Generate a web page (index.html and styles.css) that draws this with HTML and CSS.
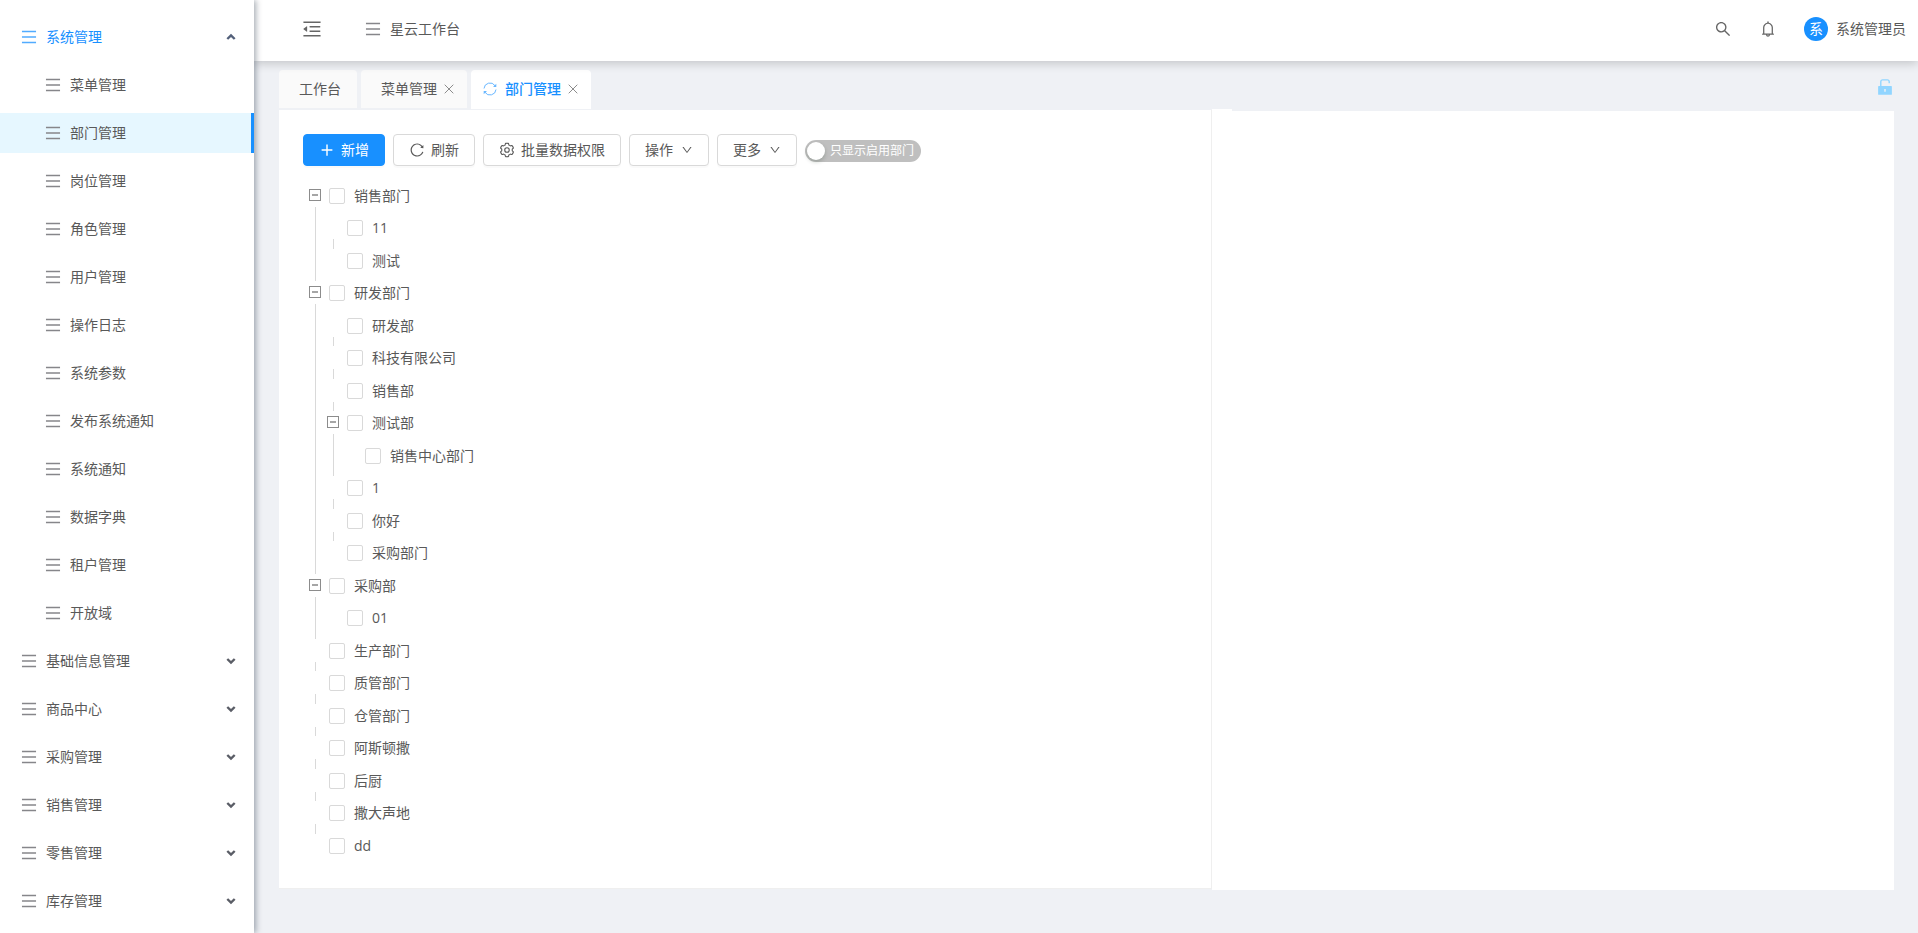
FILE: index.html
```html
<!DOCTYPE html>
<html lang="zh-CN">
<head>
<meta charset="utf-8">
<title>部门管理 - 星云工作台</title>
<link rel="stylesheet" href="styles.css">
</head>
<body>
<svg class="sprite" aria-hidden="true">
  <symbol id="bars" viewBox="0 0 1024 1024"><path d="M112 160h800v80H112zM112 472h800v80H112zM112 784h800v80H112z"/></symbol>
  <symbol id="fold" viewBox="0 0 1024 1024"><path d="M408 442h480c4.400 0 8-3.600 8-8v-56c0-4.400-3.600-8-8-8H408c-4.400 0-8 3.600-8 8v56c0 4.400 3.600 8 8 8zm-8 204c0 4.400 3.600 8 8 8h480c4.400 0 8-3.600 8-8v-56c0-4.400-3.600-8-8-8H408c-4.400 0-8 3.600-8 8v56zm504-486H120c-4.400 0-8 3.600-8 8v56c0 4.400 3.600 8 8 8h784c4.400 0 8-3.600 8-8v-56c0-4.400-3.600-8-8-8zm0 632H120c-4.400 0-8 3.600-8 8v56c0 4.400 3.600 8 8 8h784c4.400 0 8-3.600 8-8v-56c0-4.400-3.600-8-8-8zM115.400 518.900L271.700 642c5.800 4.600 14.400.5 14.400-6.900V388.900c0-7.400-8.500-11.500-14.400-6.900L115.400 505.100a8.740 8.740 0 000 13.800z"/></symbol>
  <symbol id="plus" viewBox="0 0 1024 1024"><path d="M466 152h92v314h298v92H558v314h-92V558H168v-92h298z"/></symbol>
  <symbol id="reload" viewBox="0 0 1024 1024"><path d="M909.1 209.3l-56.400 44.100C775.800 155.100 656.200 92 521.900 92 290 92 102.300 279.500 102 511.500 101.700 743.700 289.800 932 521.900 932c181.300 0 335.800-115 394.600-276.100 1.500-4.200-.7-8.900-4.900-10.300l-56.700-19.500a8 8 0 00-10.100 4.800c-1.800 5-3.800 10-5.900 14.900-17.300 41-42.100 77.800-73.700 109.400A344.770 344.770 0 01655.900 829c-42.300 17.900-87.400 27-133.800 27-46.500 0-91.500-9.100-133.800-27A341.500 341.500 0 01279 755.200a342.160 342.160 0 01-73.700-109.400c-17.900-42.400-27-87.400-27-133.900s9.100-91.500 27-133.900c17.300-41 42.100-77.800 73.700-109.400 31.600-31.600 68.400-56.400 109.300-73.800 42.300-17.900 87.400-27 133.800-27 46.500 0 91.500 9.100 133.800 27a341.500 341.500 0 01109.300 73.800c9.900 9.900 19.200 20.400 27.800 31.400l-60.200 47a8 8 0 003 14.100l175.600 43c5 1.200 9.900-2.600 9.900-7.700l.8-180.900c-.1-6.600-7.800-10.300-13-6.200z"/></symbol>
  <symbol id="gear" viewBox="0 0 1024 1024"><g fill="none" stroke="currentColor" stroke-width="72"><path transform="translate(20 20) scale(.96)" d="M924.800 625.700l-65.500-56c3.100-19 4.700-38.400 4.700-57.800s-1.600-38.800-4.700-57.800l65.500-56a32.030 32.030 0 009.300-35.200l-.9-2.600a443.740 443.740 0 00-79.700-137.900l-1.800-2.100a32.120 32.120 0 00-35.100-9.500l-81.300 28.900c-30-24.600-63.500-44-99.700-57.600l-15.700-85a32.050 32.050 0 00-25.800-25.700l-2.700-.5c-52.100-9.400-106.900-9.400-159 0l-2.700.5a32.050 32.050 0 00-25.800 25.700l-15.800 85.400a351.860 351.860 0 00-99 57.400l-81.900-29.100a32 32 0 00-35.100 9.500l-1.800 2.100a446.020 446.020 0 00-79.700 137.900l-.9 2.600c-4.500 12.500-.8 26.500 9.300 35.200l66.300 56.600c-3.100 18.800-4.600 38-4.600 57.100 0 19.200 1.500 38.400 4.600 57.100L99 625.500a32.030 32.030 0 00-9.300 35.200l.9 2.600c18.100 50.400 44.900 96.900 79.700 137.900l1.800 2.100a32.120 32.120 0 0035.100 9.500l81.900-29.100c29.800 24.500 63.100 43.900 99 57.400l15.800 85.400a32.050 32.050 0 0025.800 25.700l2.700.5a449.400 449.400 0 00159 0l2.700-.5a32.050 32.050 0 0025.800-25.700l15.700-85a350 350 0 0099.700-57.600l81.300 28.900a32 32 0 0035.100-9.500l1.800-2.100c34.800-41.100 61.600-87.500 79.700-137.900l.9-2.600c4.500-12.300.8-26.300-9.300-35z"/><circle cx="512" cy="512" r="146"/></g></symbol>
  <symbol id="down" viewBox="0 0 1024 1024"><path d="M884 256h-75c-5.100 0-9.900 2.500-12.900 6.600L512 654.200 227.900 262.600c-3-4.100-7.800-6.600-12.900-6.600h-75c-6.500 0-10.300 7.400-6.500 12.700l352.600 486.100c12.800 17.600 39 17.600 51.700 0l352.600-486.100c3.900-5.300.1-12.700-6.400-12.700z"/></symbol>
  <symbol id="search" viewBox="0 0 1024 1024"><path d="M909.600 854.500L649.900 594.800C690.200 542.700 712 479 712 412c0-80.200-31.300-155.400-87.900-212.100-56.600-56.700-132-87.900-212.100-87.900s-155.500 31.300-212.100 87.900C143.200 256.500 112 331.800 112 412c0 80.100 31.300 155.500 87.900 212.100C256.500 680.800 331.800 712 412 712c67 0 130.600-21.800 182.700-62l259.700 259.600a8.200 8.200 0 0011.600 0l43.600-43.500a8.200 8.200 0 000-11.600zM570.400 570.400C528 612.700 471.800 636 412 636s-116-23.300-158.400-65.600C211.300 528 188 471.800 188 412s23.300-116.100 65.600-158.400C296 211.300 352.200 188 412 188s116.100 23.200 158.400 65.600S636 352.200 636 412s-23.300 116.100-65.600 158.400z"/></symbol>
  <symbol id="bell" viewBox="0 0 1024 1024"><path d="M816 768h-24V428c0-141.100-104.300-257.800-240-277.200V112c0-22.100-17.900-40-40-40s-40 17.900-40 40v38.800C336.300 170.200 232 286.900 232 428v340h-24c-17.700 0-32 14.300-32 32v32c0 4.400 3.600 8 8 8h216c0 61.800 50.200 112 112 112s112-50.200 112-112h216c4.400 0 8-3.600 8-8v-32c0-17.700-14.300-32-32-32zM512 888c-26.500 0-48-21.500-48-48h96c0 26.500-21.500 48-48 48zM304 768V428c0-55.600 21.600-107.800 60.900-147.100S456.400 220 512 220c55.600 0 107.800 21.600 147.100 60.900S720 372.400 720 428v340H304z"/></symbol>
  <symbol id="unlock" viewBox="0 0 1024 1024"><path d="M832 464H332V240c0-30.900 25.100-56 56-56h248c30.900 0 56 25.100 56 56v68c0 4.400 3.600 8 8 8h56c4.400 0 8-3.600 8-8v-68c0-70.700-57.300-128-128-128H388c-70.700 0-128 57.300-128 128v224h-68c-17.700 0-32 14.300-32 32v384c0 17.700 14.300 32 32 32h640c17.700 0 32-14.300 32-32V496c0-17.700-14.300-32-32-32zM540 701v53c0 4.400-3.600 8-8 8h-40c-4.400 0-8-3.600-8-8v-53a48.010 48.010 0 1156 0z"/></symbol>
  <symbol id="sync" viewBox="0 0 14 14"><path d="M1 6.500a6 6 0 0 1 11-2.800M13 7.500a6 6 0 0 1-11 2.800" fill="none" stroke="currentColor"/><path d="M13.300 1.700v3.200h-3.300zM.7 12.300V9.100H4z"/></symbol>
  <symbol id="close" viewBox="0 0 10 10"><path d="M.7.700l8.600 8.600M9.300.700L.7 9.300" fill="none" stroke="currentColor"/></symbol>
  <symbol id="chevron" viewBox="0 0 10 10"><path d="M1.300 3L5 6.600 8.700 3" fill="none" stroke="currentColor" stroke-width="2.400"/></symbol>
</svg>
<div class="app">
  <nav class="sidebar">
    <button class="item head open" aria-expanded="true"><svg class="i18"><use href="#bars"/></svg><span>系统管理</span><svg class="arrow"><use href="#chevron"/></svg></button>
    <a class="item sub" href="#"><svg class="i18"><use href="#bars"/></svg><span>菜单管理</span></a>
    <a class="item sub active" href="#"><svg class="i18"><use href="#bars"/></svg><span>部门管理</span></a>
    <a class="item sub" href="#"><svg class="i18"><use href="#bars"/></svg><span>岗位管理</span></a>
    <a class="item sub" href="#"><svg class="i18"><use href="#bars"/></svg><span>角色管理</span></a>
    <a class="item sub" href="#"><svg class="i18"><use href="#bars"/></svg><span>用户管理</span></a>
    <a class="item sub" href="#"><svg class="i18"><use href="#bars"/></svg><span>操作日志</span></a>
    <a class="item sub" href="#"><svg class="i18"><use href="#bars"/></svg><span>系统参数</span></a>
    <a class="item sub" href="#"><svg class="i18"><use href="#bars"/></svg><span>发布系统通知</span></a>
    <a class="item sub" href="#"><svg class="i18"><use href="#bars"/></svg><span>系统通知</span></a>
    <a class="item sub" href="#"><svg class="i18"><use href="#bars"/></svg><span>数据字典</span></a>
    <a class="item sub" href="#"><svg class="i18"><use href="#bars"/></svg><span>租户管理</span></a>
    <a class="item sub" href="#"><svg class="i18"><use href="#bars"/></svg><span>开放域</span></a>
    <button class="item head"><svg class="i18"><use href="#bars"/></svg><span>基础信息管理</span><svg class="arrow"><use href="#chevron"/></svg></button>
    <button class="item head"><svg class="i18"><use href="#bars"/></svg><span>商品中心</span><svg class="arrow"><use href="#chevron"/></svg></button>
    <button class="item head"><svg class="i18"><use href="#bars"/></svg><span>采购管理</span><svg class="arrow"><use href="#chevron"/></svg></button>
    <button class="item head"><svg class="i18"><use href="#bars"/></svg><span>销售管理</span><svg class="arrow"><use href="#chevron"/></svg></button>
    <button class="item head"><svg class="i18"><use href="#bars"/></svg><span>零售管理</span><svg class="arrow"><use href="#chevron"/></svg></button>
    <button class="item head"><svg class="i18"><use href="#bars"/></svg><span>库存管理</span><svg class="arrow"><use href="#chevron"/></svg></button>
  </nav>
  <div class="page">
    <header class="topbar">
      <button class="plain" aria-label="收起菜单"><svg class="i22"><use href="#fold"/></svg></button>
      <a class="crumb" href="#"><svg class="i18"><use href="#bars"/></svg><span>星云工作台</span></a>
      <div class="tools">
        <button class="plain" aria-label="搜索"><svg class="i18"><use href="#search"/></svg></button>
        <button class="plain" aria-label="通知"><svg class="i18"><use href="#bell"/></svg></button>
        <button class="user"><span class="avatar">系</span><span>系统管理员</span></button>
      </div>
    </header>
    <div class="tabs">
      <a class="tab" href="#">工作台</a>
      <div class="tab closable"><a href="#">菜单管理</a><button class="plain" aria-label="关闭菜单管理"><svg class="i10"><use href="#close"/></svg></button></div>
      <div class="tab current"><svg class="i14"><use href="#sync"/></svg><a href="#">部门管理</a><button class="plain" aria-label="关闭部门管理"><svg class="i10"><use href="#close"/></svg></button></div>
      <button class="plain lock" aria-label="锁定标签"><svg class="i20"><use href="#unlock"/></svg></button>
    </div>
    <main class="panels">
      <section class="panel left">
        <div class="actions">
          <button class="btn primary"><svg class="i16"><use href="#plus"/></svg>新增</button>
          <button class="btn"><svg class="i16"><use href="#reload"/></svg>刷新</button>
          <button class="btn"><svg class="i16"><use href="#gear"/></svg>批量数据权限</button>
          <button class="btn menu">操作<svg class="i12"><use href="#down"/></svg></button>
          <button class="btn menu">更多<svg class="i12"><use href="#down"/></svg></button>
          <button class="switch" role="switch" aria-checked="false"><span class="knob"></span>只显示启用部门</button>
        </div>
        <ul class="tree">
          <li><div class="row"><button class="toggle" aria-label="收起"></button><label><input type="checkbox">销售部门</label></div>
            <ul>
              <li><div class="row tall"><label><input type="checkbox">11</label></div></li>
              <li><div class="row"><label><input type="checkbox">测试</label></div></li>
            </ul>
          </li>
          <li><div class="row tall"><button class="toggle" aria-label="收起"></button><label><input type="checkbox">研发部门</label></div>
            <ul>
              <li><div class="row"><label><input type="checkbox">研发部</label></div></li>
              <li><div class="row tall"><label><input type="checkbox">科技有限公司</label></div></li>
              <li><div class="row"><label><input type="checkbox">销售部</label></div></li>
              <li><div class="row tall"><button class="toggle" aria-label="收起"></button><label><input type="checkbox">测试部</label></div>
                <ul>
                  <li><div class="row"><label><input type="checkbox">销售中心部门</label></div></li>
                </ul>
              </li>
              <li><div class="row tall"><label><input type="checkbox">1</label></div></li>
              <li><div class="row"><label><input type="checkbox">你好</label></div></li>
              <li><div class="row tall"><label><input type="checkbox">采购部门</label></div></li>
            </ul>
          </li>
          <li><div class="row"><button class="toggle" aria-label="收起"></button><label><input type="checkbox">采购部</label></div>
            <ul>
              <li><div class="row tall"><label><input type="checkbox">01</label></div></li>
            </ul>
          </li>
          <li><div class="row"><label><input type="checkbox">生产部门</label></div></li>
          <li><div class="row tall"><label><input type="checkbox">质管部门</label></div></li>
          <li><div class="row"><label><input type="checkbox">仓管部门</label></div></li>
          <li><div class="row tall"><label><input type="checkbox">阿斯顿撒</label></div></li>
          <li><div class="row"><label><input type="checkbox">后厨</label></div></li>
          <li><div class="row tall"><label><input type="checkbox">撒大声地</label></div></li>
          <li><div class="row"><label><input type="checkbox">dd</label></div></li>
        </ul>
      </section>
      <section class="panel right"></section>
    </main>
  </div>
</div>
</body>
</html>
```
FILE: styles.css
```css
* { box-sizing: border-box; }
body {
  margin: 0;
  background: #eff1f5;
  color: #595959;
  font: 14px/22px "Open Sans", "Noto Sans CJK SC", sans-serif;
}
button, input { font: inherit; color: inherit; }
button { margin: 0; padding: 0; border: 0; background: none; cursor: pointer; }
a { color: inherit; text-decoration: none; }
svg { display: block; flex: none; fill: currentColor; }
.sprite { position: absolute; width: 0; height: 0; }
.i10 { width: 10px; height: 10px; }
.i12 { width: 12px; height: 12px; }
.i14 { width: 14px; height: 14px; }
.i16 { width: 16px; height: 16px; }
.i18 { width: 18px; height: 18px; }
.i20 { width: 20px; height: 20px; }
.i22 { width: 22px; height: 22px; }
.plain { display: flex; }

.app { display: flex; min-height: 100vh; }

/* sidebar */
.sidebar {
  position: relative;
  z-index: 2;
  flex: 0 0 254px;
  display: flex;
  flex-direction: column;
  gap: 8px;
  padding-top: 17px;
  background: #fff;
  box-shadow: 2px 0 6px rgba(0, 21, 41, .35);
}
.item {
  display: flex;
  align-items: center;
  gap: 8px;
  width: 100%;
  height: 40px;
  padding: 0 18px 0 20px;
  text-align: left;
}
.item .i18, .crumb .i18 { color: #86868a; }
.item.sub { padding-left: 44px; }
.item.active { background: #e6f7ff; border-right: 3px solid #1890ff; }
.item.open, .item.open .i18 { color: #1890ff; }
.item.open .i18 { opacity: .75; }
.arrow { width: 10px; height: 10px; margin-left: auto; color: #5a5d66; }
.open .arrow { transform: rotate(180deg); color: #53607a; }

/* header */
.page { flex: 1; min-width: 0; display: flex; flex-direction: column; }
.topbar {
  position: relative;
  z-index: 1;
  display: flex;
  align-items: center;
  height: 61px;
  padding: 0 12px 4px 47px;
  background: #fff;
  box-shadow: 0 2px 10px rgba(0, 0, 0, .2);
}
.topbar > .plain { color: #666; }
.crumb { display: flex; align-items: center; gap: 8px; margin-left: 41px; }
.tools { display: flex; align-items: center; margin-left: auto; }
.tools .plain { margin-right: 27px; color: #666; }
.user { display: flex; align-items: center; gap: 8px; }
.avatar {
  width: 24px;
  height: 24px;
  border-radius: 50%;
  background: #1890ff;
  color: #fff;
  line-height: 24px;
  text-align: center;
}

/* tabs */
.tabs { display: flex; gap: 4px; padding: 9px 24px 2px 25px; }
.tab {
  display: flex;
  align-items: center;
  height: 38px;
  padding: 0 16px 0 20px;
  border-radius: 4px 4px 0 0;
  background: #fafafa;
}
.tab .plain { margin-left: 7px; color: #8c8c8c; }
.tab.closable { padding-right: 13px; }
.tab.current { height: 39px; margin-bottom: -1px; padding: 0 13px 1px 12px; background: #fff; color: #1890ff; font-weight: 500; }
.tab.current > svg { margin-right: 8px; color: #69b7ff; }
.tabs .lock { align-self: flex-start; margin: 7px -1px 0 auto; color: #91d5ff; }

/* content */
.panels {
  flex: 1;
  display: grid;
  grid-template-columns: 933fr 682fr;
  margin: 0 24px 43px 25px;
}
.panel { background: #fff; }
.left { margin-bottom: 1px; padding: 24px 24px 26px; border: solid #efefef; border-width: 0 1px 1px 0; }
.right { position: relative; margin-top: 1px; }
.right::before {
  content: "";
  position: absolute;
  left: 0;
  top: -2px;
  width: 20px;
  height: 2px;
  background: #fff;
}
.actions { display: flex; align-items: center; gap: 8px; }
.btn {
  display: flex;
  align-items: center;
  gap: 6px;
  height: 32px;
  padding: 0 15px;
  border: 1px solid #d9d9d9;
  border-radius: 4px;
  background: #fff;
  box-shadow: 0 2px 0 rgba(0, 0, 0, .02);
  white-space: nowrap;
}
.btn.menu { gap: 8px; }
.btn.primary { border-color: #1890ff; background: #1890ff; color: #fff; }
.switch {
  display: flex;
  align-items: center;
  gap: 5px;
  height: 22px;
  margin-top: 2px;
  padding: 0 7px 0 2px;
  border-radius: 11px;
  background: #bfbfbf;
  color: #fff;
  font-size: 12px;
}
.knob { width: 18px; height: 18px; border-radius: 50%; background: #fff; box-shadow: 0 2px 4px rgba(0, 35, 11, .2); }

/* department tree */
.tree, .tree ul { margin: 0; padding: 0; list-style: none; }
.tree { margin: 14px 0 0 3px; }
.tree ul { padding-left: 18px; }
.tree li { position: relative; }
.tree li:not(:last-child)::before {
  content: "";
  position: absolute;
  left: 9px;
  top: 27px;
  bottom: -4px;
  width: 1px;
  background: #d9d9d9;
}
.row { display: flex; height: 32px; padding-left: 3px; }
.row.tall { height: 33px; }
.row label { display: flex; align-items: center; height: 32px; margin-left: 20px; }
.row .toggle + label { margin-left: 8px; }
.row input {
  appearance: none;
  width: 16px;
  height: 16px;
  margin: 0 9px 0 0;
  border: 1px solid #d9d9d9;
  border-radius: 2px;
  background: #fff;
}
.row input:checked { border-color: #1890ff; background: #1890ff; }
.toggle {
  width: 12px;
  height: 12px;
  margin-top: 9px;
  border: 1px solid #8c8c8c;
  background: linear-gradient(#a6a6a6, #a6a6a6) center / 6px 2px no-repeat;
}
```
